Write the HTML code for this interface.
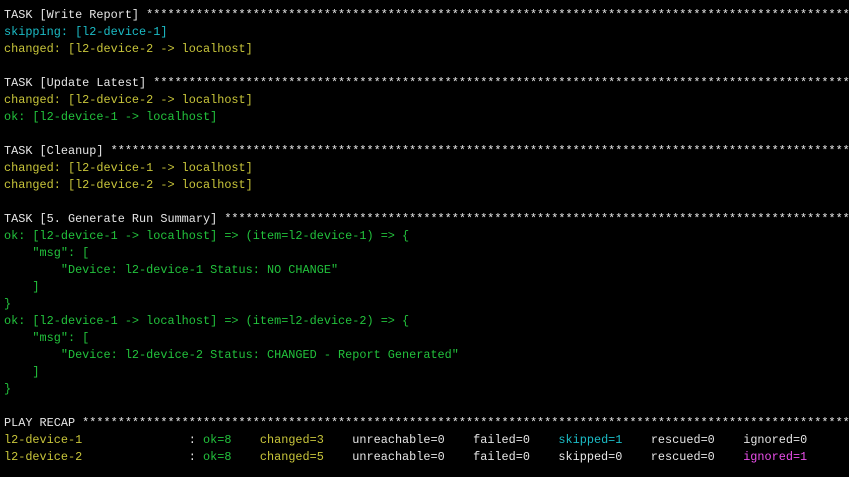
<!DOCTYPE html>
<html><head><meta charset="utf-8"><style>
html,body{margin:0;padding:0;background:#000;width:849px;height:477px;overflow:hidden}
pre{margin:0;padding:7px 0 0 4px;font-family:"Liberation Mono",monospace;font-size:11.85px;line-height:17px;color:#e6e6e6;white-space:pre;overflow:hidden;width:845px}
.c{color:#1bbcc6}.y{color:#c8c53a}.g{color:#22c23c}.m{color:#ec4fec}
</style></head><body><pre>TASK [Write Report] ************************************************************************************************************************
<span class="c">skipping: [l2-device-1]</span>
<span class="y">changed: [l2-device-2 -&gt; localhost]</span>

TASK [Update Latest] ***********************************************************************************************************************
<span class="y">changed: [l2-device-2 -&gt; localhost]</span>
<span class="g">ok: [l2-device-1 -&gt; localhost]</span>

TASK [Cleanup] *****************************************************************************************************************************
<span class="y">changed: [l2-device-1 -&gt; localhost]</span>
<span class="y">changed: [l2-device-2 -&gt; localhost]</span>

TASK [5. Generate Run Summary] *************************************************************************************************************
<span class="g">ok: [l2-device-1 -&gt; localhost] =&gt; (item=l2-device-1) =&gt; {
    "msg": [
        "Device: l2-device-1 Status: NO CHANGE"
    ]
}
ok: [l2-device-1 -&gt; localhost] =&gt; (item=l2-device-2) =&gt; {
    "msg": [
        "Device: l2-device-2 Status: CHANGED - Report Generated"
    ]
}</span>

PLAY RECAP *********************************************************************************************************************************
<span class="y">l2-device-1</span>               : <span class="g">ok=8   </span> <span class="y">changed=3   </span> unreachable=0    failed=0    <span class="c">skipped=1   </span> rescued=0    ignored=0
<span class="y">l2-device-2</span>               : <span class="g">ok=8   </span> <span class="y">changed=5   </span> unreachable=0    failed=0    skipped=0    rescued=0    <span class="m">ignored=1</span>
</pre></body></html>
